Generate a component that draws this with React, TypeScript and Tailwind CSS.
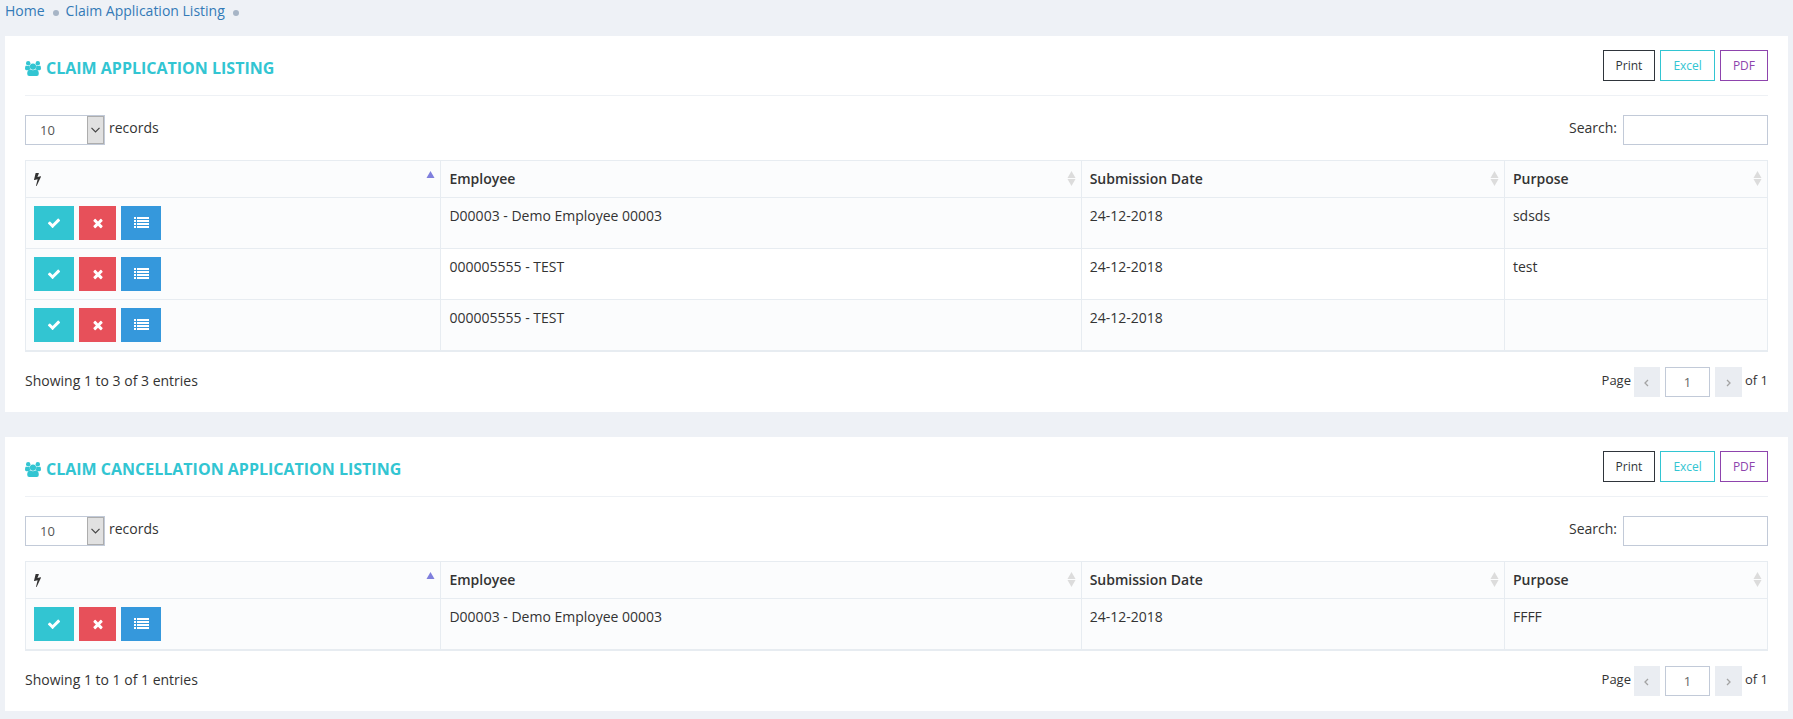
import { useState } from "react";
import type { ReactNode } from "react";

type Claim = {
  employee: string;
  date: string;
  purpose: string;
};

const claims: Claim[] = [
  { employee: "D00003 - Demo Employee 00003", date: "24-12-2018", purpose: "sdsds" },
  { employee: "000005555 - TEST", date: "24-12-2018", purpose: "test" },
  { employee: "000005555 - TEST", date: "24-12-2018", purpose: "" },
];

const cancellations: Claim[] = [
  { employee: "D00003 - Demo Employee 00003", date: "24-12-2018", purpose: "FFFF" },
];

const UsersIcon = () => (
  <svg viewBox="0 0 16 15" className="h-[15px] w-4" fill="currentColor" aria-hidden="true">
    <circle cx="3.2" cy="2.2" r="2.2" />
    <circle cx="12.8" cy="2.2" r="2.2" />
    <path d="M1 4.4Q3 5.4 4.7 4.6Q4.5 7 5.8 8.2Q4.6 8.4 3.9 9.2H1.4Q0 9.2 0 7.4Q0 4.8 1 4.4z" />
    <path d="M15 4.4Q13 5.4 11.3 4.6Q11.5 7 10.2 8.2Q11.4 8.4 12.1 9.2H14.6Q16 9.2 16 7.4Q16 4.8 15 4.4z" />
    <circle cx="8" cy="5.6" r="3.1" />
    <path d="M4.9 8.4Q8 10 11.1 8.4Q13.8 8.8 13.8 12.8Q13.8 15 11.8 15H4.2Q2.2 15 2.2 12.8Q2.2 8.8 4.9 8.4z" />
  </svg>
);

const BoltIcon = () => (
  <svg viewBox="448 0 896 1792" className="h-[14px] w-[7px]" fill="currentColor" aria-hidden="true">
    <path d="M1333 566q18 20 7 44l-540 1157q-13 25-42 25-4 0-14-2-17-5-25.5-19t-4.5-30l197-808-406 101q-4 1-12 1-18 0-31-11-18-15-13-39l201-825q4-14 16-23t28-9h328q19 0 32 12.5t13 29.5q0 8-5 18l-171 463 396-98q8-2 12-2 19 0 34 15z" />
  </svg>
);

const CheckIcon = () => (
  <svg viewBox="0 0 1792 1792" className="h-[14px] w-[14px]" fill="currentColor" aria-hidden="true">
    <path d="M1671 566q0 40-28 68l-724 724-136 136q-28 28-68 28t-68-28l-136-136-362-362q-28-28-28-68t28-68l136-136q28-28 68-28t68 28l294 295 656-657q28-28 68-28t68 28l136 136q28 28 28 68z" />
  </svg>
);

const TimesIcon = () => (
  <svg viewBox="0 0 1792 1792" className="h-[14px] w-[14px]" fill="currentColor" aria-hidden="true">
    <path d="M1490 1322q0 40-28 68l-136 136q-28 28-68 28t-68-28l-294-294-294 294q-28 28-68 28t-68-28l-136-136q-28-28-28-68t28-68l294-294-294-294q-28-28-28-68t28-68l136-136q28-28 68-28t68 28l294 294 294-294q28-28 68-28t68 28l136 136q28 28 28 68t-28 68l-294 294 294 294q28 28 28 68z" />
  </svg>
);

const ListIcon = () => (
  <svg viewBox="0 0 16 12" className="h-3 w-4" fill="currentColor" aria-hidden="true">
    {[0, 3, 6, 9].map((y) => (
      <g key={y}>
        <rect x="1" y={y} width="2" height="2" />
        <rect x="4" y={y} width="12" height="2" />
      </g>
    ))}
  </svg>
);

const SortIcon = ({ active }: { active?: boolean }) => (
  <svg viewBox="0 0 9 16" className="h-4 w-[9px] shrink-0" aria-hidden="true">
    <path d="M4.5 0L8.5 7H0.5z" fill={active ? "#7f7fdd" : "#dcdcdc"} />
    {active ? null : <path d="M0.5 8H8.5L4.5 15z" fill="#dcdcdc" />}
  </svg>
);

const Chevron = ({ d }: { d: string }) => (
  <svg viewBox="0 0 5 8" className="mt-px h-2 w-[5px]" fill="none" stroke="#a3a3a3" strokeWidth="1.3" aria-hidden="true">
    <path d={d} />
  </svg>
);

const Dot = () => (
  <svg viewBox="0 0 6 6" className="mt-[3px] ml-px h-[6px] w-[6px]" fill="#a7b5c6" aria-hidden="true">
    <circle cx="3" cy="3" r="3" />
  </svg>
);

const Th = ({ children, active, width }: { children: ReactNode; active?: boolean; width: string }) => (
  <th
    className={`${width} border-r border-b border-[#e7ecf1] bg-[#fbfcfd] py-2 pr-[5px] pl-2 text-left font-semibold`}
    aria-sort={active ? "ascending" : undefined}
  >
    <div className="flex items-center justify-between">
      {children}
      <SortIcon active={active} />
    </div>
  </th>
);

type ListingProps = {
  id: string;
  title: string;
  rows: Claim[];
};

const Listing = ({ id, title, rows }: ListingProps) => {
  const [length, setLength] = useState("10");
  const [search, setSearch] = useState("");
  const [page, setPage] = useState("1");

  const visible = rows.filter((row) =>
    `${row.employee} ${row.date} ${row.purpose}`.toLowerCase().includes(search.toLowerCase())
  );
  const cell = "border-r border-b border-[#e7ecf1] p-2 align-top";

  return (
    <section className="bg-white px-5 pt-[14px] pb-[15px]">
      <div className="flex items-start justify-between border-b border-[#eef1f5] pb-[14px]">
        <h2 className="flex items-center gap-[5px] pt-2 text-base leading-5 font-bold text-[#32c5d2] uppercase">
          <UsersIcon />
          {title}
        </h2>
        <div className="flex gap-[5px] text-xs leading-[19px]">
          <button className="border border-[#2f353b] px-3 py-[5px] text-[#2f353b]">Print</button>
          <button className="border border-[#32c5d2] px-3 py-[5px] text-[#32c5d2]">Excel</button>
          <button className="border border-[#8e44ad] px-3 py-[5px] text-[#8e44ad]">PDF</button>
        </div>
      </div>

      <div className="mt-[19px] flex items-start justify-between leading-[26px]">
        <div className="flex items-start gap-1">
          <div className="relative">
            <select
              id={`${id}-length`}
              value={length}
              onChange={(e) => setLength(e.target.value)}
              className="block h-[30px] w-20 appearance-none border border-[#c2cad8] bg-white pl-[14px] text-[13px] text-[#555]"
            >
              <option>10</option>
              <option>20</option>
              <option>50</option>
            </select>
            <span className="pointer-events-none absolute inset-y-px right-px grid w-[17px] place-items-center border border-[#adadad] bg-[#e1e1e1]">
              <svg viewBox="0 0 9 6" className="h-[6px] w-[9px]" fill="none" stroke="#444" strokeWidth="1.2" aria-hidden="true">
                <path d="M0.5 0.8L4.5 4.8L8.5 0.8" />
              </svg>
            </span>
          </div>
          <label htmlFor={`${id}-length`}>records</label>
        </div>
        <div className="flex items-start gap-[6px]">
          <label htmlFor={`${id}-search`}>Search:</label>
          <input
            id={`${id}-search`}
            type="text"
            value={search}
            onChange={(e) => setSearch(e.target.value)}
            className="h-[30px] w-[145px] border border-[#c2cad8] px-2 text-[13px] text-[#555]"
          />
        </div>
      </div>

      <table className="mt-[15px] w-full table-fixed border-separate border-spacing-0 border-t border-b border-l border-[#e7ecf1]">
        <thead>
          <tr>
            <Th width="w-[23.85%]" active>
              <BoltIcon />
            </Th>
            <Th width="w-[36.75%]">Employee</Th>
            <Th width="w-[24.3%]">Submission Date</Th>
            <Th width="w-[15.1%]">Purpose</Th>
          </tr>
        </thead>
        <tbody>
          {visible.map((row, i) => (
            <tr key={i} className="odd:bg-[#fbfcfd]">
              <td className={`${cell} bg-[#fbfcfd]`}>
                <div className="flex gap-[5px] text-white">
                  <button aria-label="Approve" className="grid h-[34px] w-10 place-items-center bg-[#32c5d2]">
                    <CheckIcon />
                  </button>
                  <button aria-label="Reject" className="grid h-[34px] w-[37px] place-items-center bg-[#e7505a]">
                    <TimesIcon />
                  </button>
                  <button aria-label="Details" className="grid h-[34px] w-10 place-items-center bg-[#3598dc]">
                    <ListIcon />
                  </button>
                </div>
              </td>
              <td className={cell}>{row.employee}</td>
              <td className={cell}>{row.date}</td>
              <td className={cell}>{row.purpose}</td>
            </tr>
          ))}
        </tbody>
      </table>

      <div className="mt-[15px] flex items-start justify-between leading-7">
        <div>
          Showing 1 to {visible.length} of {rows.length} entries
        </div>
        <div className="flex items-start text-[13px] leading-[26px]">
          <label htmlFor={`${id}-page`}>Page</label>
          <button aria-label="Previous page" className="ml-[3px] grid h-[30px] w-[26px] place-items-center bg-[#eaedf2]">
            <Chevron d="M4 1L1 4L4 7" />
          </button>
          <input
            id={`${id}-page`}
            type="text"
            value={page}
            onChange={(e) => setPage(e.target.value)}
            className="mx-[5px] h-[30px] w-[45px] border border-[#c2cad8] text-center text-[#666]"
          />
          <button aria-label="Next page" className="mr-[3px] grid h-[30px] w-[27px] place-items-center bg-[#eaedf2]">
            <Chevron d="M1 1L4 4L1 7" />
          </button>
          <span>of 1</span>
        </div>
      </div>
    </section>
  );
};

const App = () => {
  return (
    <div className="min-h-screen bg-[#eef1f6] px-[5px] pb-2 font-['Open_Sans',sans-serif] text-sm leading-5 text-[#333]">
      <nav className="flex items-center gap-[7px] pb-[14px] leading-[22px] text-[#337ab7]">
        <a href="#">Home</a>
        <Dot />
        <a href="#">Claim Application Listing</a>
        <Dot />
      </nav>
      <main className="flex flex-col gap-[25px]">
        <Listing id="claims" title="Claim Application Listing" rows={claims} />
        <Listing id="cancellations" title="Claim Cancellation Application Listing" rows={cancellations} />
      </main>
    </div>
  );
};

export default App;
